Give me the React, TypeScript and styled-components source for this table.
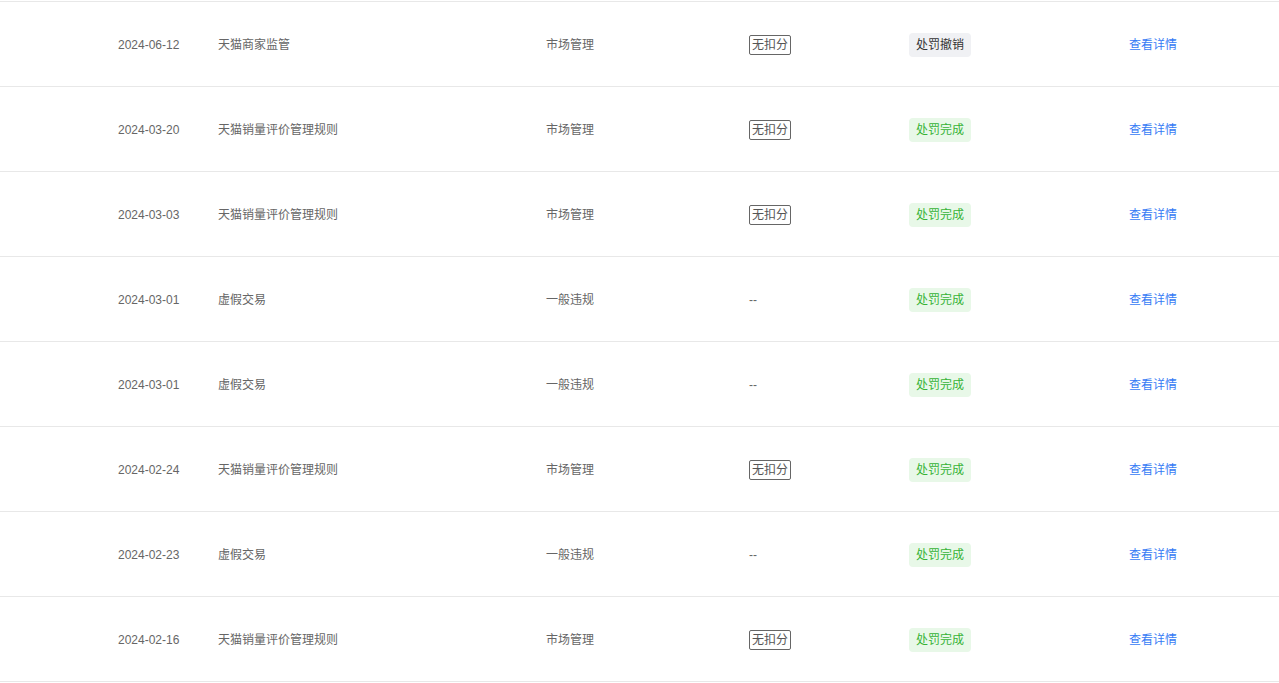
import React from "react";
import styled, { createGlobalStyle } from "styled-components";

const GlobalStyle = createGlobalStyle`
  html, body {
    margin: 0;
    padding: 0;
    background: #fff;
  }
  body {
    font-family: "Liberation Sans", "Noto Sans CJK SC", sans-serif;
    font-size: 12px;
  }
`;

type Status = "revoked" | "done";

type Record = {
  date: string;
  rule: string;
  kind: string;
  noDeduct: boolean;
  status: Status;
};

const records: Record[] = [
  { date: "2024-06-12", rule: "天猫商家监管", kind: "市场管理", noDeduct: true, status: "revoked" },
  { date: "2024-03-20", rule: "天猫销量评价管理规则", kind: "市场管理", noDeduct: true, status: "done" },
  { date: "2024-03-03", rule: "天猫销量评价管理规则", kind: "市场管理", noDeduct: true, status: "done" },
  { date: "2024-03-01", rule: "虚假交易", kind: "一般违规", noDeduct: false, status: "done" },
  { date: "2024-03-01", rule: "虚假交易", kind: "一般违规", noDeduct: false, status: "done" },
  { date: "2024-02-24", rule: "天猫销量评价管理规则", kind: "市场管理", noDeduct: true, status: "done" },
  { date: "2024-02-23", rule: "虚假交易", kind: "一般违规", noDeduct: false, status: "done" },
  { date: "2024-02-16", rule: "天猫销量评价管理规则", kind: "市场管理", noDeduct: true, status: "done" },
];

const Table = styled.div`
  padding-top: 1px;
  width: 1279px;
`;

const Row = styled.div`
  display: grid;
  grid-template-columns: 118px 100px 328px 203px 160px 220px 1fr;
  align-items: center;
  height: 83px;
  padding-top: 1px;
  border-top: 1px solid #e8e8e8;
  color: #666;

  &:last-child {
    border-bottom: 1px solid #e8e8e8;
  }
`;

const Cell = styled.div`
  white-space: nowrap;
  line-height: 16px;
  color: #666;
`;

const ScoreTag = styled.span`
  display: inline-block;
  box-sizing: border-box;
  height: 20px;
  line-height: 18px;
  padding: 0 2px;
  border: 1px solid #666;
  border-radius: 2px;
  color: #555;
`;

const StatusTag = styled.span<{ $status: Status }>`
  display: inline-block;
  box-sizing: border-box;
  height: 24px;
  line-height: 24px;
  padding: 0 7px;
  border-radius: 4px;
  background: ${(p) => (p.$status === "done" ? "#e8f8e8" : "#f0f1f4")};
  color: ${(p) => (p.$status === "done" ? "#36b336" : "#333")};
`;

const Link = styled.a`
  color: #367bf5;
  text-decoration: none;
  cursor: pointer;
`;

const App = () => (
  <>
    <GlobalStyle />
    <Table>
      {records.map((r, i) => (
        <Row key={i}>
          <Cell />
          <Cell>{r.date}</Cell>
          <Cell>{r.rule}</Cell>
          <Cell>{r.kind}</Cell>
          <Cell>{r.noDeduct ? <ScoreTag>无扣分</ScoreTag> : "--"}</Cell>
          <Cell>
            <StatusTag $status={r.status}>
              {r.status === "done" ? "处罚完成" : "处罚撤销"}
            </StatusTag>
          </Cell>
          <Cell>
            <Link>查看详情</Link>
          </Cell>
        </Row>
      ))}
    </Table>
  </>
);

export default App;
